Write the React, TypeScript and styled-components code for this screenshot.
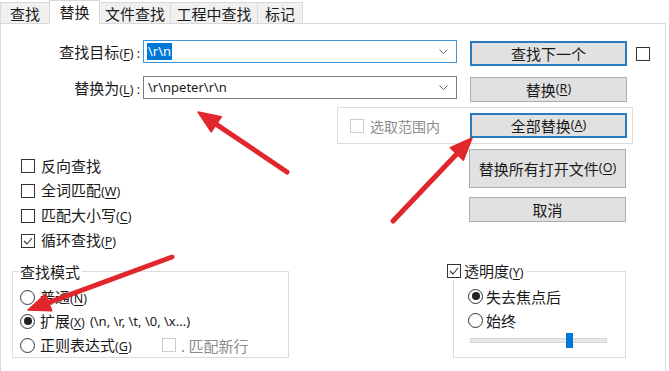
import React from 'react';
import styled, { createGlobalStyle } from 'styled-components';

const GlobalStyle = createGlobalStyle`
  body {
    margin: 0;
    background: #fff;
  }
  * {
    box-sizing: border-box;
  }
`;

const CJK = `"Noto Sans CJK SC", "Noto Sans", sans-serif`;
const LATIN = `"Noto Sans", "Noto Sans CJK SC", sans-serif`;

const Window = styled.div`
  position: relative;
  width: 669px;
  height: 371px;
  overflow: hidden;
  background: #fff;
  font-family: ${CJK};
  font-size: 15px;
  color: #1a1a1a;
`;

const TabBar = styled.div`
  display: flex;
  align-items: flex-end;
  height: 23px;
`;

const Tab = styled.div<{ $w: number; $active?: boolean }>`
  width: ${({ $w }) => $w}px;
  height: ${({ $active }) => ($active ? 24 : 21)}px;
  margin-left: -1px;
  margin-bottom: ${({ $active }) => ($active ? -1 : 0)}px;
  z-index: ${({ $active }) => ($active ? 2 : 1)};
  display: flex;
  align-items: center;
  justify-content: center;
  padding-bottom: ${({ $active }) => ($active ? 3 : 0)}px;
  background: ${({ $active }) => ($active ? '#fff' : '#f0f0f0')};
  border: 1px solid #d9d9d9;
  border-bottom: none;
  line-height: 1;
  &:first-child {
    margin-left: 0;
  }
`;

const Panel = styled.div`
  width: 666px;
  height: 348px;
  border: 1px solid #d9d9d9;
  border-bottom: none;
  padding-top: 16px;
`;

const FieldRow = styled.div<{ $top?: number }>`
  display: flex;
  align-items: flex-start;
  margin-top: ${({ $top }) => $top ?? 0}px;
`;

const FieldLabel = styled.label`
  width: 139px;
  height: 23px;
  line-height: 23px;
  text-align: right;
  white-space: nowrap;
`;

const Accel = styled.span`
  font-family: ${LATIN};
  font-size: 12.5px;
  u {
    text-decoration: underline;
    text-underline-offset: 2px;
  }
`;

const Combo = styled.div<{ $focused?: boolean }>`
  margin-left: 3px;
  width: 314px;
  height: 23px;
  display: flex;
  align-items: center;
  padding: 0 8px 0 3px;
  border: 1px solid ${({ $focused }) => ($focused ? '#3f95d8' : '#7a7a7a')};
  background: #fff;
  font-family: ${LATIN};
  font-size: 13px;
`;

const ComboText = styled.span<{ $selected?: boolean }>`
  padding: 0 1px;
  line-height: 17px;
  background: ${({ $selected }) => ($selected ? '#0078d7' : 'transparent')};
  color: ${({ $selected }) => ($selected ? '#fff' : '#1a1a1a')};
`;

const Chevron = styled.svg`
  margin-left: auto;
  width: 9px;
  height: 5px;
`;

const Button = styled.div<{ $h?: number; $default?: boolean; $ml?: number; $mt?: number }>`
  width: 157px;
  height: ${({ $h }) => $h ?? 25}px;
  margin-left: ${({ $ml }) => $ml ?? 0}px;
  margin-top: ${({ $mt }) => $mt ?? 0}px;
  flex-shrink: 0;
  display: flex;
  align-items: center;
  justify-content: center;
  background: #e1e1e1;
  border: ${({ $default }) => ($default ? '2px solid #2a7cc2' : '1px solid #adadad')};
  white-space: nowrap;
  line-height: 1;
`;

const Box = styled.div<{ $disabled?: boolean; $ml?: number; $mt?: number }>`
  width: 14px;
  height: 14px;
  flex-shrink: 0;
  margin-left: ${({ $ml }) => $ml ?? 0}px;
  margin-top: ${({ $mt }) => $mt ?? 0}px;
  border: 1px solid ${({ $disabled }) => ($disabled ? '#cccccc' : '#333')};
  background: #fff;
  display: flex;
  align-items: center;
  justify-content: center;
`;

const Check = ({ checked, disabled, ml, mt }: { checked?: boolean; disabled?: boolean; ml?: number; mt?: number }) => (
  <Box $disabled={disabled} $ml={ml} $mt={mt}>
    {checked && (
      <svg width="12" height="12" viewBox="0 0 12 12">
        <polyline points="2,6 5,9 10,3" fill="none" stroke="#333" strokeWidth="1.1" />
      </svg>
    )}
  </Box>
);

const RadioCircle = styled.div<{ $on?: boolean }>`
  width: 15px;
  height: 15px;
  flex-shrink: 0;
  border-radius: 50%;
  border: 1px solid #333;
  background: #fff;
  display: flex;
  align-items: center;
  justify-content: center;
  &::after {
    content: '';
    display: ${({ $on }) => ($on ? 'block' : 'none')};
    width: 8px;
    height: 8px;
    border-radius: 50%;
    background: #222;
  }
`;

const ScopeGroup = styled.div`
  margin-top: 5px;
  margin-left: 336px;
  width: 296px;
  height: 37px;
  border: 1px solid #dcdcdc;
  display: flex;
  align-items: center;
  padding: 5px 5px 5px 12px;
`;

const ScopeText = styled.span`
  margin-left: 6px;
  width: 84px;
  overflow: hidden;
  white-space: nowrap;
  font-size: 14px;
  color: #8d8d8d;
`;

const LowerRow = styled.div`
  display: flex;
  margin-top: 5px;
`;

const OptionColumn = styled.div`
  width: 468px;
  padding: 4px 0 0 20px;
  display: flex;
  flex-direction: column;
`;

const OptionRow = styled.div<{ $h?: number }>`
  height: ${({ $h }) => $h ?? 25}px;
  display: flex;
  align-items: center;
  white-space: nowrap;
`;

const OptionText = styled.span<{ $gap?: number; $w?: number; $muted?: boolean }>`
  margin-left: ${({ $gap }) => $gap ?? 6}px;
  width: ${({ $w }) => ($w ? `${$w}px` : 'auto')};
  color: ${({ $muted }) => ($muted ? '#8d8d8d' : 'inherit')};
  line-height: 1;
`;

const ButtonColumn = styled.div`
  display: flex;
  flex-direction: column;
  gap: 9px;
`;

const GroupRow = styled.div`
  display: flex;
  align-items: flex-start;
  margin-top: 18px;
`;

const GroupBox = styled.div<{ $ml: number; $w: number }>`
  margin-left: ${({ $ml }) => $ml}px;
  width: ${({ $w }) => $w}px;
  height: 87px;
  border: 1px solid #dcdcdc;
  display: flex;
  flex-direction: column;
`;

const Legend = styled.div<{ $ml: number }>`
  margin-top: -10px;
  margin-left: ${({ $ml }) => $ml}px;
  height: 18px;
  padding: 0 2px 0 1px;
  align-self: flex-start;
  display: flex;
  align-items: center;
  background: #fff;
  line-height: 1;
  white-space: nowrap;
`;

const GroupBody = styled.div<{ $pl: number; $pt: number }>`
  padding: ${({ $pt }) => $pt}px 0 0 ${({ $pl }) => $pl}px;
  display: flex;
  flex-direction: column;
`;

const Hint = styled.span`
  margin-left: 5px;
  font-family: ${LATIN};
  font-size: 13px;
`;

const SliderWrap = styled.div`
  height: 16px;
  padding-left: 2px;
  display: flex;
  align-items: center;
`;

const SliderTrack = styled.div`
  width: 137px;
  height: 5px;
  background: #e7e7e7;
  border: 1px solid #d6d6d6;
  display: flex;
  align-items: center;
  padding-left: 95px;
`;

const SliderThumb = styled.div`
  width: 7px;
  height: 15px;
  flex-shrink: 0;
  background: #0078d7;
`;

const Overlay = styled.svg`
  position: absolute;
  left: 0;
  top: 0;
  pointer-events: none;
`;

type Pt = [number, number];

const Arrow = ({ tail, tip }: { tail: Pt; tip: Pt }) => {
  const dx = tip[0] - tail[0];
  const dy = tip[1] - tail[1];
  const len = Math.hypot(dx, dy);
  const ux = dx / len;
  const uy = dy / len;
  const headLen = 22;
  const half = 9;
  const bx = tip[0] - ux * headLen;
  const by = tip[1] - uy * headLen;
  const px = -uy;
  const py = ux;
  const head = `${tip[0]},${tip[1]} ${bx + px * half},${by + py * half} ${bx - px * half},${by - py * half}`;
  return (
    <g>
      <line x1={tail[0]} y1={tail[1]} x2={bx + ux * 4} y2={by + uy * 4} stroke="#e1262c" strokeWidth="5" strokeLinecap="round" />
      <polygon points={head} fill="#e1262c" stroke="#e1262c" strokeWidth="1.5" strokeLinejoin="round" />
    </g>
  );
};

const DropChevron = () => (
  <Chevron viewBox="0 0 9 5">
    <polyline points="0.5,0.5 4.5,4.5 8.5,0.5" fill="none" stroke="#666" strokeWidth="1" />
  </Chevron>
);

const tabs = [
  { label: '查找', w: 50 },
  { label: '替换', w: 51, active: true },
  { label: '文件查找', w: 72 },
  { label: '工程中查找', w: 88 },
  { label: '标记', w: 46 },
];

export default function App() {
  return (
    <>
      <GlobalStyle />
      <Window>
        <TabBar>
          {tabs.map((t) => (
            <Tab key={t.label} $w={t.w} $active={t.active}>
              {t.label}
            </Tab>
          ))}
        </TabBar>

        <Panel>
          <FieldRow>
            <FieldLabel>
              查找目标<Accel>(<u>F</u>) :</Accel>
            </FieldLabel>
            <Combo $focused>
              <ComboText $selected>\r\n</ComboText>
              <DropChevron />
            </Combo>
            <Button $default $ml={13} $mt={1}>查找下一个</Button>
            <Check ml={9} mt={7} />
          </FieldRow>

          <FieldRow $top={10}>
            <FieldLabel>
              替换为<Accel>(<u>L</u>) :</Accel>
            </FieldLabel>
            <Combo>
              <ComboText>\r\npeter\r\n</ComboText>
              <DropChevron />
            </Combo>
            <Button $ml={13} $mt={1}>
              替换<Accel>(<u>R</u>)</Accel>
            </Button>
          </FieldRow>

          <ScopeGroup>
            <Check disabled />
            <ScopeText>选取范围内(I)</ScopeText>
            <Button $default $ml={30}>
              全部替换<Accel>(<u>A</u>)</Accel>
            </Button>
          </ScopeGroup>

          <LowerRow>
            <OptionColumn>
              <OptionRow>
                <Check />
                <OptionText>反向查找</OptionText>
              </OptionRow>
              <OptionRow>
                <Check />
                <OptionText>
                  全词匹配<Accel>(<u>W</u>)</Accel>
                </OptionText>
              </OptionRow>
              <OptionRow>
                <Check />
                <OptionText>
                  匹配大小写<Accel>(<u>C</u>)</Accel>
                </OptionText>
              </OptionRow>
              <OptionRow>
                <Check checked />
                <OptionText>
                  循环查找<Accel>(<u>P</u>)</Accel>
                </OptionText>
              </OptionRow>
            </OptionColumn>
            <ButtonColumn>
              <Button $h={39}>
                替换所有打开文件<Accel>(<u>O</u>)</Accel>
              </Button>
              <Button>取消</Button>
            </ButtonColumn>
          </LowerRow>

          <GroupRow>
            <GroupBox $ml={11} $w={277}>
              <Legend $ml={6}>查找模式</Legend>
              <GroupBody $pl={7} $pt={5}>
                <OptionRow $h={24}>
                  <RadioCircle />
                  <OptionText $gap={5}>
                    普通<Accel>(<u>N</u>)</Accel>
                  </OptionText>
                </OptionRow>
                <OptionRow $h={24}>
                  <RadioCircle $on />
                  <OptionText $gap={5}>
                    扩展<Accel>(<u>X</u>)</Accel>
                  </OptionText>
                  <Hint>(\n, \r, \t, \0, \x...)</Hint>
                </OptionRow>
                <OptionRow $h={24}>
                  <RadioCircle />
                  <OptionText $gap={5} $w={122}>
                    正则表达式<Accel>(<u>G</u>)</Accel>
                  </OptionText>
                  <Check disabled />
                  <OptionText $muted $gap={5}>. 匹配新行</OptionText>
                </OptionRow>
              </GroupBody>
            </GroupBox>

            <GroupBox $ml={164} $w={173}>
              <Legend $ml={-8}>
                <Check checked />
                <OptionText $gap={3}>
                  透明度<Accel>(<u>Y</u>)</Accel>
                </OptionText>
              </Legend>
              <GroupBody $pl={14} $pt={4}>
                <OptionRow $h={24}>
                  <RadioCircle $on />
                  <OptionText $gap={3}>失去焦点后</OptionText>
                </OptionRow>
                <OptionRow $h={24}>
                  <RadioCircle />
                  <OptionText $gap={3}>始终</OptionText>
                </OptionRow>
                <SliderWrap>
                  <SliderTrack>
                    <SliderThumb />
                  </SliderTrack>
                </SliderWrap>
              </GroupBody>
            </GroupBox>
          </GroupRow>
        </Panel>

        <Overlay width="669" height="371" viewBox="0 0 669 371">
          <Arrow tail={[287, 172]} tip={[198, 112]} />
          <Arrow tail={[393, 221]} tip={[472, 138]} />
          <Arrow tail={[172, 257]} tip={[28, 310]} />
        </Overlay>
      </Window>
    </>
  );
}
